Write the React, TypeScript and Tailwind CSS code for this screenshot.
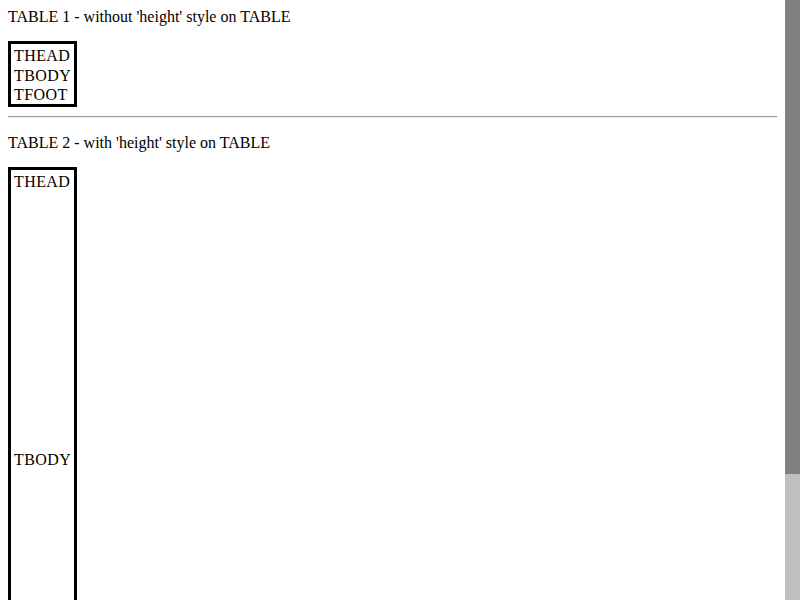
export default function App() {
	return (
		<div className="flex h-screen overflow-hidden bg-white text-[16px] text-black font-['Liberation_Serif','Times_New_Roman',serif]">
			<div className="min-w-0 flex-1 overflow-hidden p-2">
				<div className="leading-[18px]">TABLE 1 - without 'height' style on TABLE</div>
				<div className="mt-[15px] flex h-[66px] w-[69px] flex-col border-[3px] border-black px-[3px] pt-[2px] leading-[19.5px] tracking-[0.4px]">
					<div>THEAD</div>
					<div>TBODY</div>
					<div>TFOOT</div>
				</div>
				<div className="mt-[9px] border-t border-b border-t-[#9a9a9a] border-b-[#eeeeee]" />
				<div className="mt-[16px] leading-[18px]">TABLE 2 - with 'height' style on TABLE</div>
				<div className="mt-[15px] flex h-[586px] w-[69px] flex-col border-[3px] border-black p-[3px] leading-[18px] tracking-[0.4px]">
					<div>THEAD</div>
					<div className="flex flex-1 items-center">TBODY</div>
					<div>TFOOT</div>
				</div>
			</div>
			<div className="flex w-[15px] shrink-0 flex-col">
				<div className="h-[474px] bg-[#808080]" />
				<div className="flex-1 bg-[#c0c0c0]" />
			</div>
		</div>
	)
}
